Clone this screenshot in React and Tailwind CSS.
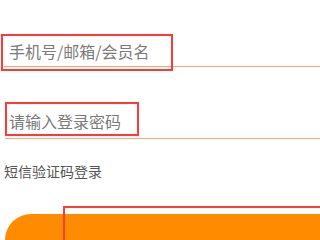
export default function App() {
  return (
    <div
      className="relative h-[240px] w-[320px] overflow-hidden bg-white"
      style={{ fontFamily: '"Noto Sans CJK SC", "Noto Sans", sans-serif' }}
    >
      <div className="pl-[4px] pt-[34px]">
        <div className="flex h-[33px] items-center border-b border-[#ffa270] pl-[5px] pt-[2px] text-[16px] text-[#7a7a7a]">
          手机号/邮箱/会员名
        </div>
        <div className="ml-[1px] mt-[39px] flex h-[33px] items-center border-b border-[#ffa270] pb-[3px] pl-[4px] text-[16px] text-[#7a7a7a]">
          请输入登录密码
        </div>
        <div className="mt-[22px] text-[14px] leading-[20px] text-[#555]">短信验证码登录</div>
        <div className="ml-[1px] mt-[33px] h-[52px] w-[360px] rounded-[26px] bg-[#ff8c00]" />
      </div>

      {/* red annotation boxes */}
      <div className="absolute left-[1px] top-[34px] h-[37px] w-[172px] border-2 border-[#ff3838]" />
      <div className="absolute left-[5px] top-[102px] h-[34px] w-[134px] border-2 border-[#ff3838]" />
      <div className="absolute left-[63px] top-[206px] h-[60px] w-[280px] border-2 border-[#ff3838]" />
    </div>
  );
}
